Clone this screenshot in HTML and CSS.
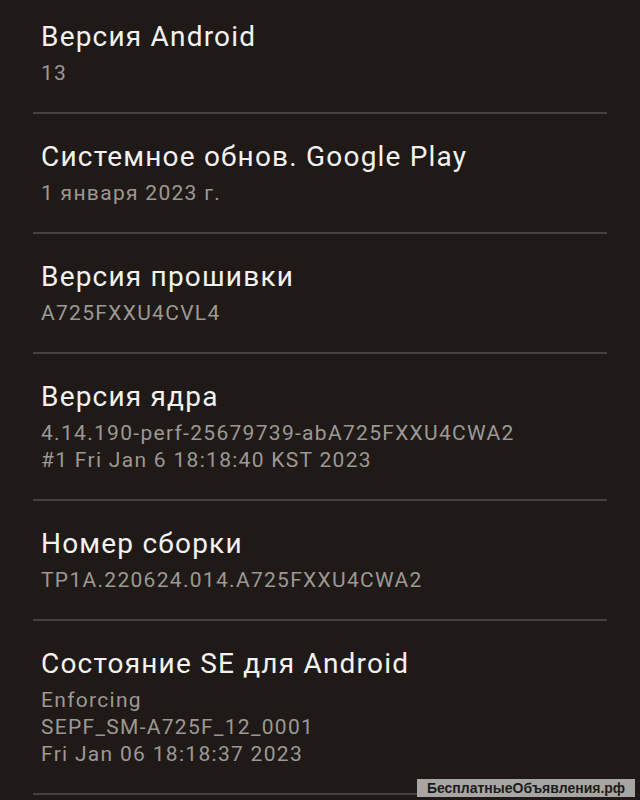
FILE: index.html
```html
<!DOCTYPE html>
<html lang="ru">
  <head>
    <meta charset="UTF-8" />
    <meta name="viewport" content="width=device-width, initial-scale=1.0" />
    <title>Сведения о ПО</title>
    <link rel="stylesheet" href="styles.css">
  </head>
  <body>
    <ul class="info-list">
      <li class="info-item">
        <div class="info-title">Версия Android</div>
        <div class="info-value">13</div>
      </li>
      <li class="info-item">
        <div class="info-title">Системное обнов. Google Play</div>
        <div class="info-value">1 января 2023 г.</div>
      </li>
      <li class="info-item">
        <div class="info-title">Версия прошивки</div>
        <div class="info-value">A725FXXU4CVL4</div>
      </li>
      <li class="info-item">
        <div class="info-title">Версия ядра</div>
        <div class="info-value">4.14.190-perf-25679739-abA725FXXU4CWA2</div>
        <div class="info-value">#1 Fri Jan 6 18:18:40 KST 2023</div>
      </li>
      <li class="info-item">
        <div class="info-title">Номер сборки</div>
        <div class="info-value">TP1A.220624.014.A725FXXU4CWA2</div>
      </li>
      <li class="info-item">
        <div class="info-title">Состояние SE для Android</div>
        <div class="info-value">Enforcing</div>
        <div class="info-value">SEPF_SM-A725F_12_0001</div>
        <div class="info-value">Fri Jan 06 18:18:37 2023</div>
      </li>
    </ul>

    <div class="watermark">БесплатныеОбъявления.рф</div>
  </body>
</html>
```

FILE: styles.css
```css
body {
  font-family: Roboto, "Noto Sans", sans-serif;
  margin: 0;
  padding: 0;
  background-color: #1f1a17;
  height: 800px;
  overflow: hidden;
}

.info-list {
  list-style: none;
  margin: -6px 0 0 0;
  padding: 0;
}

.info-item {
  margin: 0 33px;
  padding: 25px 0 25px 8px;
  border-bottom: 2px solid #45413e;
}

.info-title {
  font-size: 28px;
  line-height: 36px;
  letter-spacing: 1.2px;
  color: #f4f2f0;
  margin-bottom: 5px;
}

.info-value {
  font-size: 21px;
  line-height: 27px;
  letter-spacing: 1.3px;
  color: #9c9894;
}

.watermark {
  position: absolute;
  left: 417px;
  top: 779px;
  width: 218px;
  height: 18px;
  background-color: #a8a6a3;
  color: #1c1c1c;
  font-family: "Liberation Sans", Arial, sans-serif;
  font-weight: bold;
  font-size: 14px;
  line-height: 18px;
  text-align: center;
}
```
